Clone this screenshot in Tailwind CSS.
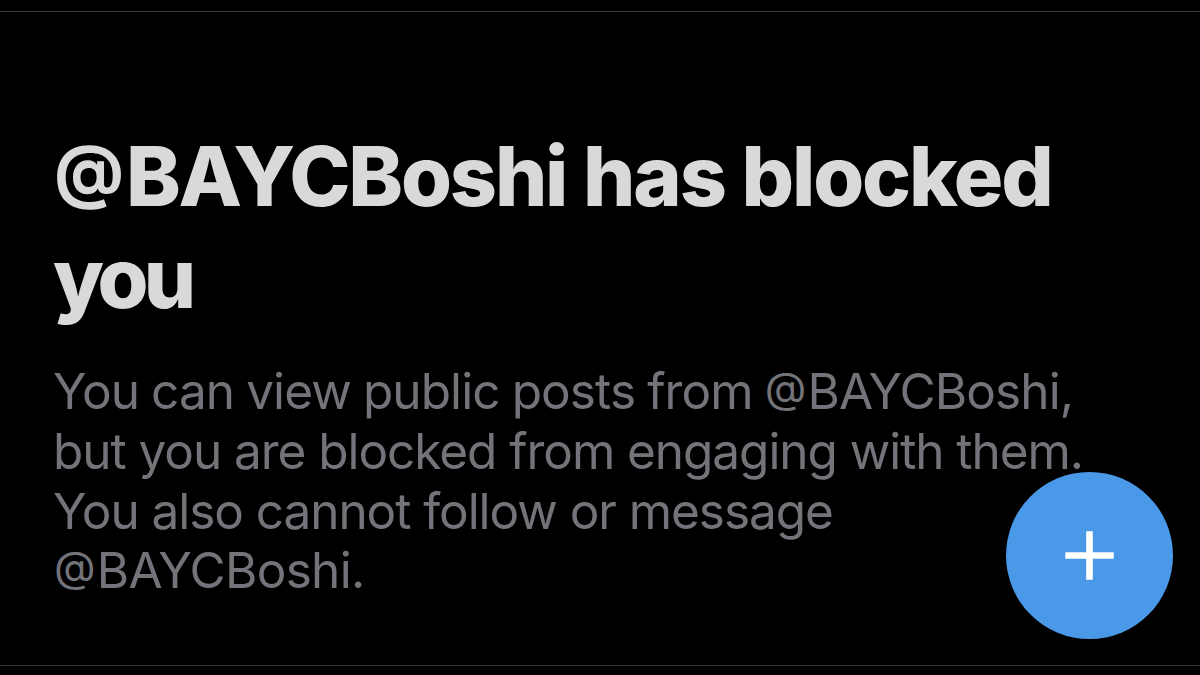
<!DOCTYPE html>
<html lang="en">
<head>
    <meta charset="UTF-8">
    <title>Blocked profile</title>
    <script src="https://cdn.jsdelivr.net/npm/@tailwindcss/browser@4"></script>
</head>
<body class="bg-black overflow-hidden font-['Inter',sans-serif]">
    <div class="relative w-[1200px] h-[675px] pt-[11px] pb-[9px] flex flex-col">
        <!-- Blocked notice -->
        <main class="flex-1 border-y border-[#38383a] pl-[53px] pt-[113px]">
            <h1 class="text-[82.5px] leading-[102px] font-extrabold text-[#d9d9d9] whitespace-nowrap">
                <span class="block w-fit h-[102px] pl-px tracking-[-2.2px] [word-spacing:1px]"><span class="text-[69px] leading-none align-[11px] font-bold mr-[4px]">@</span>BAYCBoshi has blocked</span>
                <span class="block w-fit h-[102px] tracking-[-5px]">you</span>
            </h1>
            <p class="mt-[33px] text-[49.5px] leading-[59.8px] text-[#727479] whitespace-nowrap">
                <span class="block w-fit h-[59.8px] tracking-[-0.9px] [word-spacing:-1px]">You can view public posts from <span class="text-[43px] leading-none align-[6px] mr-[2px]">@</span>BAYCBoshi,</span>
                <span class="block w-fit h-[59.8px] tracking-[-1.05px]">but you are blocked from engaging with them.</span>
                <span class="block w-fit h-[59.8px] tracking-[-1.05px]">You also cannot follow or message</span>
                <span class="block w-fit h-[59.8px] pl-px tracking-[-0.7px]"><span class="text-[43px] leading-none align-[6px] mr-[2px]">@</span>BAYCBoshi.</span>
            </p>
        </main>

        <!-- Compose button -->
        <button aria-label="New post" class="absolute left-[1006px] top-[472px] size-[167px] rounded-full bg-[#4a99e9] flex items-center justify-center">
            <svg class="size-[49px]" viewBox="0 0 49 49" fill="none" stroke="#fff" stroke-width="6.6">
                <path d="M24.5 .3v48.4M.3 24.5h48.4" />
            </svg>
        </button>
    </div>
</body>
</html>
